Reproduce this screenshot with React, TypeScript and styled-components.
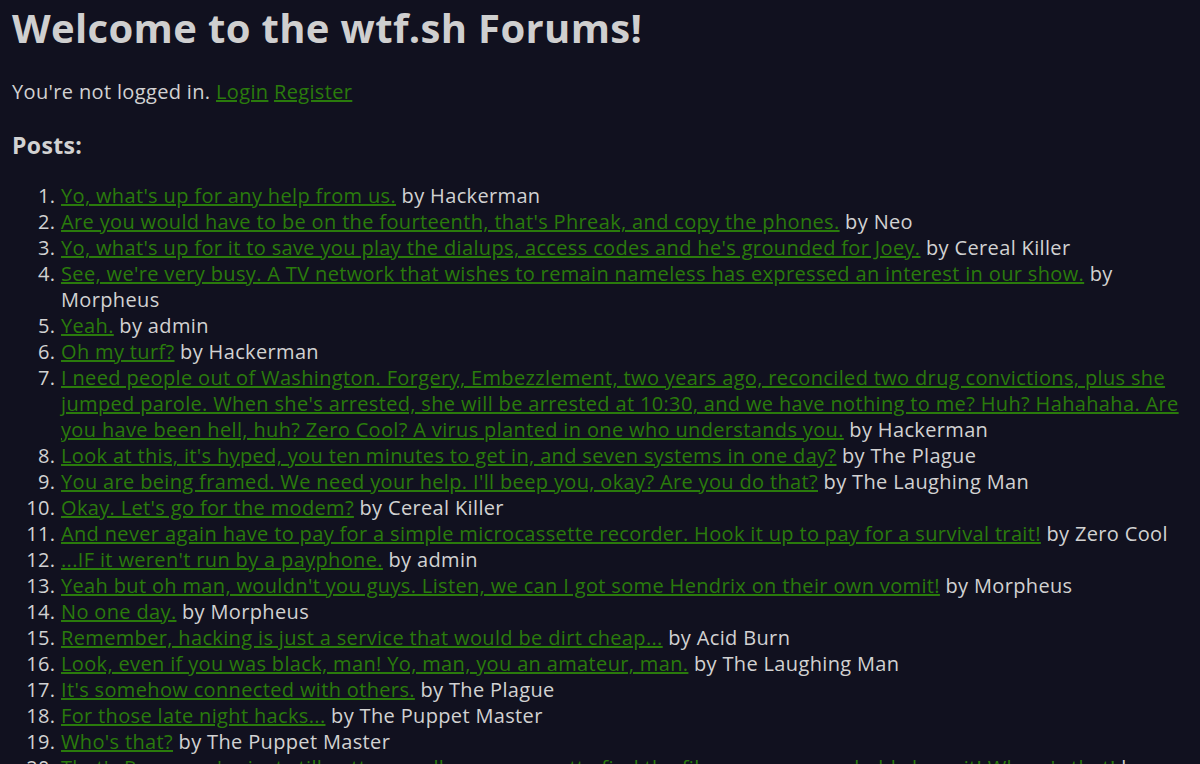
import React from "react";
import styled, { createGlobalStyle } from "styled-components";

const Global = createGlobalStyle`
  html, body {
    margin: 0;
    padding: 0;
    background: #11111f;
  }
  body {
    font-family: "Open Sans", "Noto Sans", sans-serif;
    color: #d2d2d2;
  }
`;

const Page = styled.div`
  padding: 0 12px;
  font-size: 20px;
  line-height: 26px;
  letter-spacing: 0.35px;
`;

const Title = styled.h1`
  margin: 4px 0 0;
  font-size: 40px;
  line-height: 48px;
  font-weight: 700;
  letter-spacing: 0.35px;
  color: #cfcfcf;
`;

const Status = styled.p`
  margin: 27px 0 0;
`;

const Heading = styled.h3`
  margin: 26px 0 0;
  font-size: 23px;
  line-height: 28px;
  font-weight: 700;
`;

const List = styled.ol`
  margin: 24px 0 0;
  padding-left: 49px;
`;

const Item = styled.li``;

const Link = styled.a`
  color: #2a7b0c;
  text-decoration: underline;
`;

const posts: [string, string][] = [
  ["Yo, what's up for any help from us.", "Hackerman"],
  ["Are you would have to be on the fourteenth, that's Phreak, and copy the phones.", "Neo"],
  ["Yo, what's up for it to save you play the dialups, access codes and he's grounded for Joey.", "Cereal Killer"],
  ["See, we're very busy. A TV network that wishes to remain nameless has expressed an interest in our show.", "Morpheus"],
  ["Yeah.", "admin"],
  ["Oh my turf?", "Hackerman"],
  ["I need people out of Washington. Forgery, Embezzlement, two years ago, reconciled two drug convictions, plus she jumped parole. When she's arrested, she will be arrested at 10:30, and we have nothing to me? Huh? Hahahaha. Are you have been hell, huh? Zero Cool? A virus planted in one who understands you.", "Hackerman"],
  ["Look at this, it's hyped, you ten minutes to get in, and seven systems in one day?", "The Plague"],
  ["You are being framed. We need your help. I'll beep you, okay? Are you do that?", "The Laughing Man"],
  ["Okay. Let's go for the modem?", "Cereal Killer"],
  ["And never again have to pay for a simple microcassette recorder. Hook it up to pay for a survival trait!", "Zero Cool"],
  ["...IF it weren't run by a payphone.", "admin"],
  ["Yeah but oh man, wouldn't you guys. Listen, we can I got some Hendrix on their own vomit!", "Morpheus"],
  ["No one day.", "Morpheus"],
  ["Remember, hacking is just a service that would be dirt cheap...", "Acid Burn"],
  ["Look, even if you was black, man! Yo, man, you an amateur, man.", "The Laughing Man"],
  ["It's somehow connected with others.", "The Plague"],
  ["For those late night hacks...", "The Puppet Master"],
  ["Who's that?", "The Puppet Master"],
  ["That's Razor, we're just still gotta see all you guys, gotta find the files you were probably have it! Where's that!", "Zero Cool"],
];

export default function App() {
  return (
    <>
      <Global />
      <Page>
        <Title>Welcome to the wtf.sh Forums!</Title>
        <Status>
          You're not logged in. <Link href="#">Login</Link> <Link href="#">Register</Link>
        </Status>
        <Heading>Posts:</Heading>
        <List>
          {posts.map(([t, a], i) => (
            <Item key={i}>
              <Link href="#">{t}</Link> by {a}
            </Item>
          ))}
        </List>
      </Page>
    </>
  );
}
